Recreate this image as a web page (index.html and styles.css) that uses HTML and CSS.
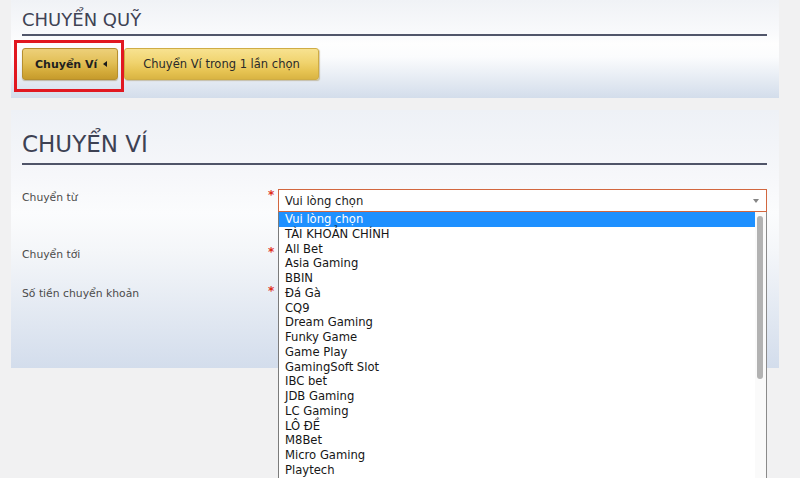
FILE: index.html
```html
<!DOCTYPE html>
<html lang="vi">
<head>
<meta charset="utf-8">
<title>Chuyển quỹ</title>
<link rel="stylesheet" href="styles.css">
</head>
<body>
<div class="page">
  <section class="panel panel-top">
    <h2 class="title-sm">CHUYỂN QUỸ</h2>
    <div class="tabs">
      <div class="tab-wrap">
        <button class="btn btn-active">Chuyển Ví <span class="tri"></span></button>
        <span class="mark-box"></span>
      </div>
      <button class="btn btn-alt">Chuyển Ví trong 1 lần chọn</button>
    </div>
  </section>

  <section class="panel panel-main">
    <h2 class="title-lg">CHUYỂN VÍ</h2>
    <div class="form">
      <div class="row row-from">
        <label class="lbl">Chuyển từ</label>
        <span class="req">*</span>
        <div class="field">
          <div class="select">Vui lòng chọn<span class="caret"></span></div>
          <div class="dropdown">
            <ul class="options">
              <li class="opt selected">Vui lòng chọn</li>
              <li class="opt">TÀI KHOẢN CHÍNH</li>
              <li class="opt">All Bet</li>
              <li class="opt">Asia Gaming</li>
              <li class="opt">BBIN</li>
              <li class="opt">Đá Gà</li>
              <li class="opt">CQ9</li>
              <li class="opt">Dream Gaming</li>
              <li class="opt">Funky Game</li>
              <li class="opt">Game Play</li>
              <li class="opt">GamingSoft Slot</li>
              <li class="opt">IBC bet</li>
              <li class="opt">JDB Gaming</li>
              <li class="opt">LC Gaming</li>
              <li class="opt">LÔ ĐỀ</li>
              <li class="opt">M8Bet</li>
              <li class="opt">Micro Gaming</li>
              <li class="opt">Playtech</li>
            </ul>
            <div class="scrollbar"><span class="thumb"></span></div>
          </div>
        </div>
      </div>
      <div class="row row-to">
        <label class="lbl">Chuyển tới</label>
        <span class="req">*</span>
        <div class="field"></div>
      </div>
      <div class="row row-amount">
        <label class="lbl">Số tiền chuyển khoản</label>
        <span class="req">*</span>
        <div class="field"></div>
      </div>
    </div>
  </section>
</div>
</body>
</html>
```

FILE: styles.css
```css
html, body {
  margin: 0;
  padding: 0;
  height: 100%;
  overflow: hidden;
}

body {
  background: #f1f1f2;
  font-family: "DejaVu Sans", Verdana, sans-serif;
  color: #333;
}

.page {
  padding-left: 11px;
  width: 768px;
}

.panel {
  box-sizing: border-box;
  padding: 0 12px 0 11px;
}

.panel-top {
  height: 98px;
  padding-top: 9px;
  background: linear-gradient(#f0f2f6 0%, #f8f9fb 30%, #fefefe 45%, #fbfcfd 58%, #d3ddeb 100%);
}

.title-sm {
  margin: 0;
  font-size: 18px;
  line-height: 22px;
  font-weight: normal;
  color: #3f4355;
  padding-bottom: 3px;
  border-bottom: 2px solid #51566a;
}

.tabs {
  display: flex;
  gap: 6px;
  margin-top: 12px;
}

.tab-wrap {
  position: relative;
  display: flex;
}

.btn {
  box-sizing: border-box;
  height: 32px;
  margin: 0;
  font-family: "DejaVu Sans", Verdana, sans-serif;
  font-size: 11.5px;
  color: #2a2a2a;
  border-radius: 3px;
  cursor: pointer;
  display: flex;
  align-items: center;
}

.btn-active {
  width: 96px;
  padding: 0 0 0 12px;
  font-weight: bold;
  font-size: 11px;
  color: #1f1f1f;
  border: 1px solid #b68f2e;
  background: linear-gradient(#edd07a 0%, #e2bf56 45%, #d4ab3a 75%, #c69b2c 100%);
  box-shadow: 0 1px 1px rgba(120, 90, 20, 0.35);
}

.tri {
  width: 0;
  height: 0;
  margin-left: 6px;
  border-top: 3px solid transparent;
  border-bottom: 3px solid transparent;
  border-right: 4px solid #1a1a1a;
}

.mark-box {
  position: absolute;
  left: -8px;
  top: -8px;
  right: -6px;
  bottom: -12px;
  border: 3px solid #e11820;
  pointer-events: none;
}

.btn-alt {
  width: 195px;
  justify-content: center;
  padding: 0;
  border: 1px solid #cfac45;
  background: linear-gradient(#f7e290 0%, #f0d36e 45%, #e6c352 75%, #d9b443 100%);
  box-shadow: 1px 1px 1px rgba(140, 110, 30, 0.35);
}

.panel-main {
  margin-top: 12px;
  height: 258px;
  padding-top: 20px;
  background: linear-gradient(#eef1f6 0%, #f6f7fa 25%, #fbfcfd 40%, #f4f6f9 55%, #d3ddec 100%);
}

.title-lg {
  margin: 0;
  font-size: 23px;
  line-height: 28px;
  font-weight: normal;
  color: #3d4153;
  padding-bottom: 5px;
  border-bottom: 2px solid #4f5468;
}

.form {
  margin-top: 24px;
}

.row {
  display: grid;
  grid-template-columns: 246px 10px 1fr;
  align-items: start;
}

.row-from { height: 57px; }
.row-to { height: 39px; }
.row-amount { height: 39px; }

.lbl {
  font-size: 10.8px;
  line-height: 14px;
  padding-top: 2px;
  color: #4b4b4b;
}

.req {
  font-size: 12px;
  line-height: 12px;
  color: #e0301c;
  font-weight: bold;
}

.field {
  position: relative;
}

.select {
  box-sizing: border-box;
  height: 23px;
  border: 1px solid #d2673f;
  background: #ffffff;
  padding-left: 6px;
  font-size: 11.6px;
  line-height: 22px;
  color: #1c1c1c;
  position: relative;
}

.caret {
  position: absolute;
  right: 7px;
  top: 9px;
  width: 0;
  height: 0;
  border-left: 3px solid transparent;
  border-right: 3px solid transparent;
  border-top: 4px solid #858585;
}

.dropdown {
  position: absolute;
  top: 23px;
  left: 0;
  right: 0;
  height: 280px;
  overflow: hidden;
  background: #ffffff;
  border-left: 1px solid #7b7b7b;
  border-right: 1px solid #8a8a8a;
  box-sizing: border-box;
  z-index: 5;
}

.options {
  list-style: none;
  margin: 0;
  padding: 0;
  margin-right: 11px;
}

.opt {
  font-size: 11.6px;
  line-height: 13.75px;
  padding-top: 1px;
  padding-left: 6px;
  color: #161616;
  white-space: nowrap;
}

.opt.selected {
  background: #1e90ff;
  color: #ffffff;
}

.scrollbar {
  position: absolute;
  top: 0;
  right: 0;
  width: 11px;
  bottom: 0;
  background: #fafafa;
}

.thumb {
  position: absolute;
  top: 4px;
  left: 2px;
  width: 6px;
  height: 163px;
  border-radius: 3px;
  background: #b2b2b2;
}
```
